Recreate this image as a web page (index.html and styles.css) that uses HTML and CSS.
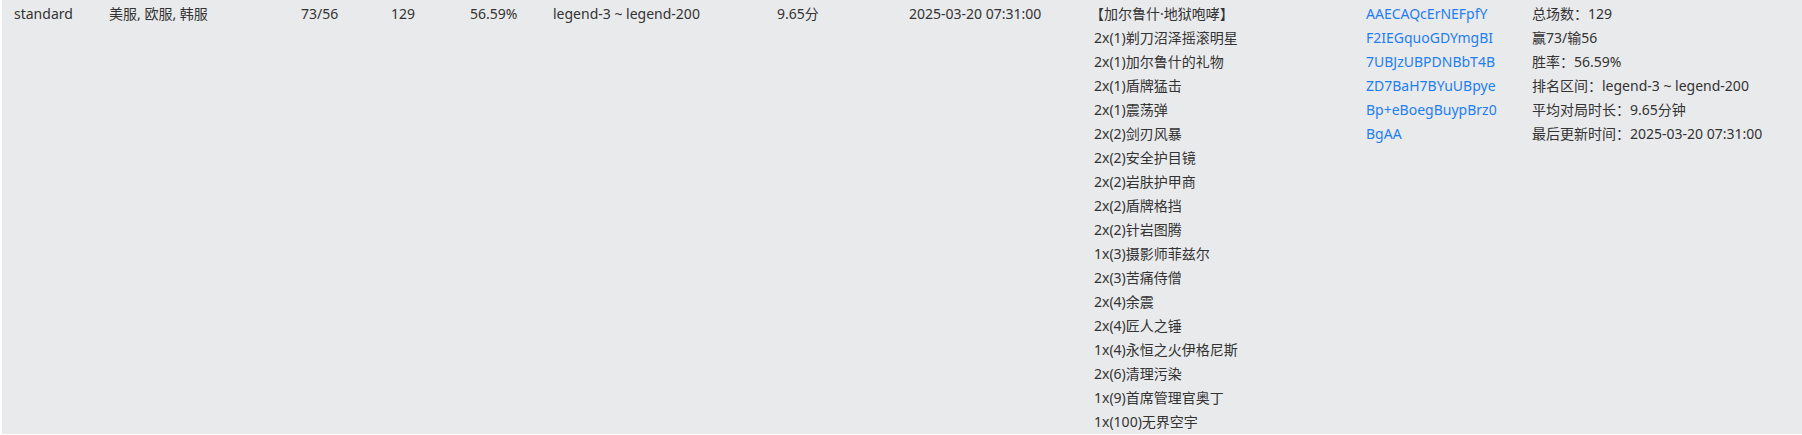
FILE: index.html
```html
<!DOCTYPE html>
<html lang="zh-CN">
<head>
<meta charset="utf-8">
<link rel="stylesheet" href="styles.css">
</head>
<body>
<table class="grid">
  <colgroup>
    <col class="c1"><col class="c2"><col class="c3"><col class="c4"><col class="c5"><col class="c6"><col class="c7"><col class="c8"><col class="c9"><col class="c10"><col class="c11">
  </colgroup>
  <tbody>
    <tr class="row">
      <td>standard</td>
      <td>美服, 欧服, 韩服</td>
      <td>73/56</td>
      <td>129</td>
      <td>56.59%</td>
      <td>legend-3 ~ legend-200</td>
      <td>9.65分</td>
      <td>2025-03-20 07:31:00</td>
      <td class="cards">
        <div class="hero">【加尔鲁什·地狱咆哮】</div>
        <div>2x(1)剃刀沼泽摇滚明星</div>
        <div>2x(1)加尔鲁什的礼物</div>
        <div>2x(1)盾牌猛击</div>
        <div>2x(1)震荡弹</div>
        <div>2x(2)剑刃风暴</div>
        <div>2x(2)安全护目镜</div>
        <div>2x(2)岩肤护甲商</div>
        <div>2x(2)盾牌格挡</div>
        <div>2x(2)针岩图腾</div>
        <div>1x(3)摄影师菲兹尔</div>
        <div>2x(3)苦痛侍僧</div>
        <div>2x(4)余震</div>
        <div>2x(4)匠人之锤</div>
        <div>1x(4)永恒之火伊格尼斯</div>
        <div>2x(6)清理污染</div>
        <div>1x(9)首席管理官奥丁</div>
        <div>1x(100)无界空宇</div>
      </td>
      <td class="code">
        <a href="#">AAECAQcErNEFpfY</a>
        <a href="#">F2IEGquoGDYmgBI</a>
        <a href="#">7UBJzUBPDNBbT4B</a>
        <a href="#">ZD7BaH7BYuUBpye</a>
        <a href="#">Bp+eBoegBuypBrz0</a>
        <a href="#">BgAA</a>
      </td>
      <td class="summary">
        <div>总场数：129</div>
        <div>赢73/输56</div>
        <div>胜率：56.59%</div>
        <div>排名区间：legend-3 ~ legend-200</div>
        <div>平均对局时长：9.65分钟</div>
        <div>最后更新时间：2025-03-20 07:31:00</div>
      </td>
    </tr>
  </tbody>
</table>
</body>
</html>
```

FILE: styles.css
```css
html, body {
  margin: 0;
  padding: 0;
  background: #ffffff;
}
body {
  font-family: "Noto Sans", "Noto Sans CJK SC", sans-serif;
  font-size: 14px;
  line-height: 24px;
  color: #333333;
  padding-left: 2px;
}
.grid {
  border-collapse: collapse;
  table-layout: fixed;
  width: 1800px;
}
.row td {
  background: #e9eaec;
  vertical-align: top;
  padding: 2px 12px 0 12px;
  white-space: nowrap;
}
.c1 { width: 95px; }
.c2 { width: 192px; }
.c3 { width: 90px; }
.c4 { width: 79px; }
.c5 { width: 83px; }
.c6 { width: 224px; }
.c7 { width: 132px; }
.c8 { width: 185px; }
.c9 { width: 272px; }
.c10 { width: 166px; }
.c11 { width: 282px; }
.cards .hero {
  margin-left: -4px;
}
.code a {
  display: block;
  color: #1f7ef0;
  text-decoration: none;
}
```
